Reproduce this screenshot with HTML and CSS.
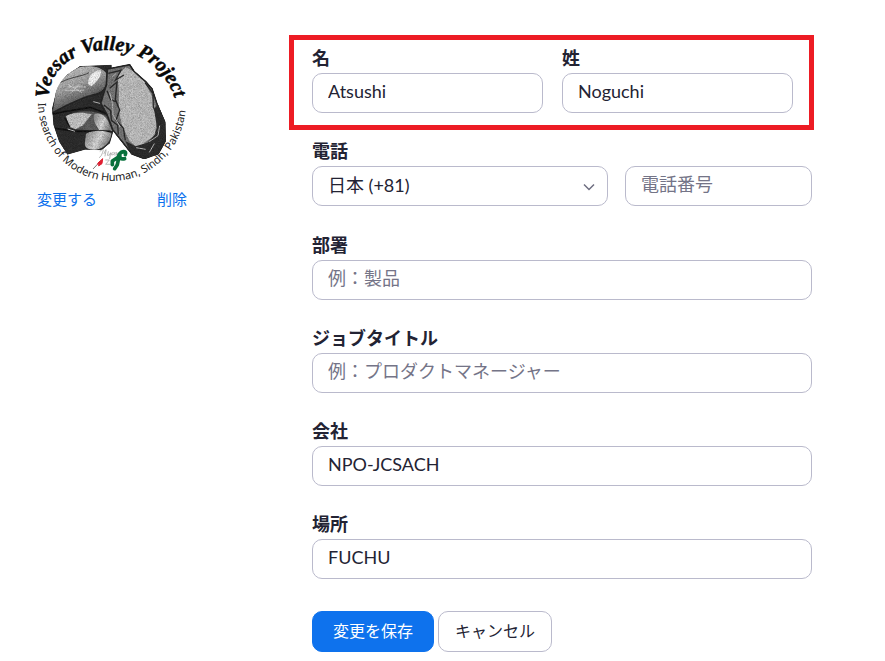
FILE: index.html
```html
<!DOCTYPE html>
<html lang="ja">
<head>
<meta charset="utf-8">
<meta name="viewport" content="width=device-width, initial-scale=1">
<title>プロフィール</title>
<link rel="stylesheet" href="styles.css">
</head>
<body>
<main class="profile">
  <aside class="avatar">
    <svg class="avatar-image" viewBox="0 0 150 150" role="img" aria-label="Veesar Valley Project">
      <defs>
        <path id="arc-top" d="M12 64 C10 42 32 17 67 16 C103 15 130 34 140 72"/>
        <path id="arc-bottom" d="M1 68 A74 79 0 0 0 149 68"/>
        <linearGradient id="thumb" x1="0" y1="0" x2="0.5" y2="1">
          <stop offset="0" stop-color="#bbb"/><stop offset="0.5" stop-color="#929292"/><stop offset="1" stop-color="#292929"/>
        </linearGradient>
        <linearGradient id="tip" x1="0" y1="0" x2="1" y2="0.4">
          <stop offset="0" stop-color="#777"/><stop offset="0.6" stop-color="#c4c4c4"/><stop offset="1" stop-color="#777"/>
        </linearGradient>
        <filter id="grain" x="0" y="0" width="1" height="1">
          <feTurbulence type="fractalNoise" baseFrequency="0.7" numOctaves="2" seed="4" result="n"/>
          <feColorMatrix in="n" type="matrix" values="1.6 0 0 0 -0.35 1.6 0 0 0 -0.35 1.6 0 0 0 -0.35 0 0 0 0 1" result="g"/>
          <feComposite in="SourceGraphic" in2="g" operator="arithmetic" k1="0.7" k2="0.75" result="m"/>
          <feComposite in="m" in2="SourceGraphic" operator="in"/>
        </filter>
      </defs>
      <g transform="translate(-7 -9) scale(0.3333)">
        <g filter="url(#grain)">
          <path fill="#292929" d="M150 123 L245 119 L250 320 L240 355 L215 376 L165 374 L112 389 L87 350 L70 300 L66 250 L78 200 L110 150 Z"/>
          <path fill="url(#thumb)" d="M78 198 C90 165 115 140 150 126 C180 120 220 124 232 150 C242 180 225 202 196 209 C160 222 120 238 68 266 Z"/>
          <path fill="#ddd" d="M174 176 C175 153 190 137 211 136 C219 146 204 168 184 184 Z"/>
          <path fill="none" stroke="#444" stroke-width="3" d="M92 172 C125 155 155 155 177 143"/>
          <path fill="none" stroke="#222" stroke-width="6" d="M68 264 C120 236 165 215 200 208 C225 200 240 175 232 148"/>
          <path fill="none" stroke="#ccc" stroke-width="2" d="M112 186 h55 M105 196 h58 M114 178 l42 25 M148 177 l-27 29"/>
          <path fill="#555" d="M105 275 C145 252 193 255 236 275 L243 317 C190 316 140 317 115 307 Z"/>
          <path fill="#b4b4b4" d="M108 273 C132 261 160 261 185 268 L159 301 L137 313 L116 304 Z"/>
          <path fill="url(#tip)" d="M193 267 C212 260 234 274 247 318 L208 315 C196 299 188 285 193 267 Z"/>
          <path fill="none" stroke="#111" stroke-width="5" d="M68 267 L108 259 L180 247 L236 268 M75 310 L140 319 L242 319 M105 278 L119 307"/>
          <path fill="url(#tip)" d="M168 326 C194 312 229 318 244 324 C243 350 225 370 197 374 C177 375 161 369 165 350 Z"/>
          <path fill="none" stroke="#aaa" stroke-width="3" d="M113 312 L135 319 M190 230 L213 236"/>
          <path fill="#6c6c6c" stroke="#222" stroke-width="5" d="M232 132 L299 119 L312 139 L347 170 L366 191 L384 245 L404 290 L406 348 L385 386 L343 401 L306 387 L282 357 L248 314 L231 269 L212 234 L229 180 Z"/>
          <path fill="#adadad" d="M262 151 L287 127 L305 136 L348 175 L370 225 L381 283 L374 332 L343 353 L332 374 L300 350 L276 301 L266 253 L267 197 Z"/>
          <path fill="#292929" d="M384 238 L406 292 L406 347 L385 386 L343 401 L302 385 L286 348 L316 364 L353 353 L383 319 L372 253 Z"/>
          <path fill="none" stroke="#262626" stroke-width="4" d="M235 145 L273 136 L257 165 L282 150 M239 190 L261 171 L256 223 L269 255 L258 286 L280 309 L286 346 M222 240 L242 257 L244 286 L263 301 L265 329 M231 197 L242 224 L257 230 M345 173 L369 205 L370 246 L391 289 L377 325"/>
          <path fill="none" stroke="#aaa" stroke-width="3" d="M245 156 L258 146 M239 203 L248 236 L249 270 L271 306 M389 302 L384 332 L358 350 M318 368 L347 373 M373 356 L358 382"/>
        </g>
        <g fill="none" stroke-linecap="round" stroke-linejoin="round">
          <path stroke="#999" stroke-width="2" d="M210 379 q14 -14 8 3 q-3 12 -10 16 M222 386 q8 -20 6 -8 l-3 15 M235 380 l-3 11 q7 3 10 -8 l-3 18 M250 382 q-8 1 -5 8 q7 1 10 -8 v9 M260 382 v9 q3 -9 9 -8 v8 M227 405 h11 l-11 13 h14"/>
          <path stroke="#777" stroke-width="3" d="M190 431 L207 413"/>
          <path fill="#df1e30" stroke="#df1e30" stroke-width="3" d="M204 414 L218 401 L216 416 L207 422 Z"/>
          <path stroke="#08713c" stroke-width="11" d="M286 389 C291 377 276 377 268 388 C262 397 273 404 284 401 M270 393 L247 408 L247 419 M266 400 L262 419 L254 431"/>
        </g>
      </g>
      <text class="ring-title"><textPath href="#arc-top" startOffset="0">Veesar Valley Project</textPath></text>
      <text class="ring-caption"><textPath href="#arc-bottom" startOffset="1">In search of Modern Human, Sindh, Pakistan</textPath></text>
    </svg>
    <div class="avatar-links">
      <a href="#change">変更する</a>
      <a href="#delete">削除</a>
    </div>
  </aside>

  <form class="form">
    <div class="section">
      <div class="names">
        <div class="field">
          <label for="first">名</label>
          <input id="first" type="text" value="Atsushi">
        </div>
        <div class="field">
          <label for="last">姓</label>
          <input id="last" type="text" value="Noguchi">
        </div>
      </div>
      <div class="field">
        <label for="country">電話</label>
        <div class="phone">
          <div class="select">
            <select id="country"><option>日本 (+81)</option></select>
            <svg class="chevron" viewBox="0 0 12 8" aria-hidden="true"><path d="M1 1.5 L6 6.5 L11 1.5"/></svg>
          </div>
          <input type="tel" placeholder="電話番号" aria-label="電話番号">
        </div>
      </div>
    </div>
    <div class="section">
      <div class="field">
        <label for="dept">部署</label>
        <input id="dept" type="text" placeholder="例：製品">
      </div>
      <div class="field">
        <label for="job">ジョブタイトル</label>
        <input id="job" type="text" placeholder="例：プロダクトマネージャー">
      </div>
      <div class="field">
        <label for="company">会社</label>
        <input id="company" type="text" value="NPO-JCSACH">
      </div>
      <div class="field">
        <label for="place">場所</label>
        <input id="place" type="text" value="FUCHU">
      </div>
    </div>
    <div class="actions">
      <button class="button primary" type="submit">変更を保存</button>
      <button class="button" type="button">キャンセル</button>
    </div>
  </form>
</main>
</body>
</html>
```
FILE: styles.css
```css
* {
  box-sizing: border-box;
}

body {
  margin: 0;
  background: #fff;
  color: #232333;
  font-family: Lato, "Noto Sans CJK JP", sans-serif;
  font-size: 18px;
}

.profile {
  display: grid;
  grid-template-columns: 150px minmax(0, 500px);
  column-gap: 125px;
  padding: 34px 37px 8px;
}

.avatar-image {
  display: block;
  width: 100%;
  overflow: visible;
}

.ring-title {
  font: italic bold 20px "Liberation Serif", serif;
  fill: #080808;
  stroke: #080808;
  stroke-width: 0.5;
}

.ring-caption {
  font: 11px "Noto Sans", sans-serif;
  fill: #222;
}

.avatar-links {
  display: flex;
  justify-content: space-between;
  margin-top: 4px;
  font-size: 15px;
  line-height: 22px;
}

.avatar-links a {
  color: #0e72ed;
  text-decoration: none;
}

.form {
  padding-top: 12px;
}

.section {
  display: grid;
  gap: 26px;
}

.section + .section {
  margin-top: 27px;
}

.names {
  position: relative;
  display: grid;
  grid-template-columns: 1fr 1fr;
}

.names .field {
  padding-right: 19px;
}

.names::after {
  content: "";
  position: absolute;
  inset: -11px -2px -17px -23px;
  border: 5px solid #ed1c24;
  pointer-events: none;
}

label {
  display: block;
  margin-bottom: 3px;
  font-weight: 700;
  line-height: 24px;
}

input,
select {
  display: block;
  width: 100%;
  height: 40px;
  margin: 0;
  padding: 0 15px 4px;
  border: 1px solid #babacc;
  border-radius: 10px;
  background: #fff;
  color: inherit;
  font: inherit;
}

input::placeholder {
  color: #747487;
  opacity: 1;
}

.phone {
  display: grid;
  grid-template-columns: 296fr 187fr;
  column-gap: 17px;
}

.select {
  position: relative;
}

select {
  appearance: none;
  padding-bottom: 2px;
}

.chevron {
  position: absolute;
  top: 17px;
  right: 13px;
  width: 12px;
  height: 8px;
  fill: none;
  stroke: #6e6e80;
  stroke-width: 1.5;
  pointer-events: none;
}

.actions {
  display: flex;
  gap: 4px;
  margin-top: 32px;
}

.button {
  height: 41px;
  padding: 0 16px 3px;
  border: 1px solid #babacc;
  border-radius: 10px;
  background: #fff;
  color: #232333;
  font: inherit;
  font-size: 16px;
}

.primary {
  padding: 0 20px 3px;
  border-color: #0e72ed;
  background: #0e72ed;
  color: #fff;
}
```
